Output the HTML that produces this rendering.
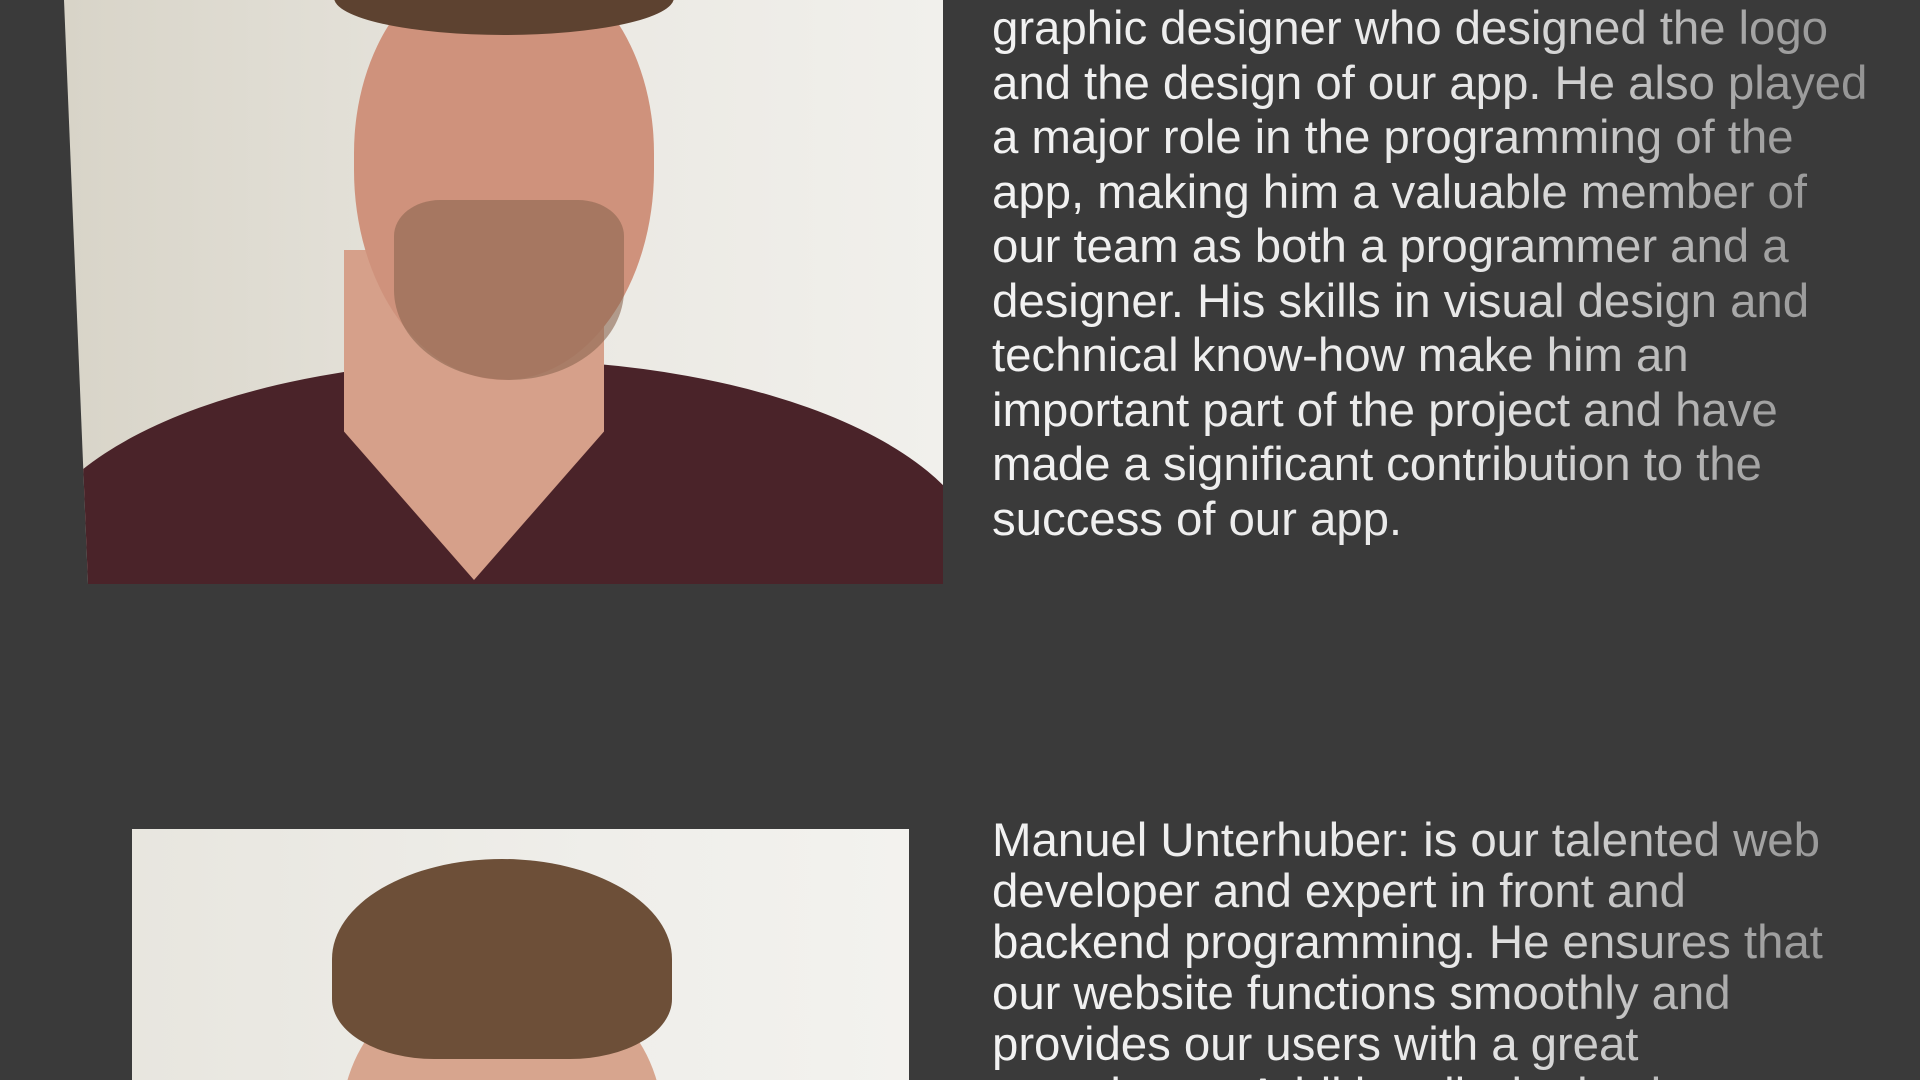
<!DOCTYPE html>
<html><head><meta charset="utf-8"><style>
html,body{margin:0;padding:0;background:#3a3a3a;width:1920px;height:1080px;overflow:hidden;position:relative;font-family:"Gill Sans","Liberation Sans",sans-serif}
.t{position:absolute;left:992px;white-space:nowrap;font-size:47.5px;line-height:54.5px;letter-spacing:-0.1px;
background:linear-gradient(90deg,#f2f2f2 0px,#e8e8e8 480px,#a0a0a0 780px,#8c8c8c 940px);
-webkit-background-clip:text;background-clip:text;color:transparent;background-size:940px 100%;background-repeat:no-repeat}
.p1{position:absolute;left:64px;top:0;width:879px;height:584px;clip-path:polygon(0 0,100% 0,100% 100%,24px 100%);
background:linear-gradient(90deg,#d8d4c8,#ebe9e3 60%,#f1f0ec);overflow:hidden}
.p1 div,.p2 div{position:absolute}
.p2{position:absolute;left:132px;top:829px;width:777px;height:251px;
background:linear-gradient(90deg,#e8e6df,#efeeea 60%,#f3f2ee);overflow:hidden}
</style></head><body>
<div class="p1">
 <div style="left:-40px;top:360px;width:960px;height:420px;border-radius:50%;background:#4a2329"></div>
 <div style="left:280px;top:250px;width:260px;height:330px;background:#d6a08a;clip-path:polygon(0 0,100% 0,100% 55%,50% 100%,0 55%)"></div>
 <div style="left:290px;top:-40px;width:300px;height:420px;border-radius:46% 46% 50% 50%;background:#cf927c"></div>
 <div style="left:270px;top:-40px;width:340px;height:75px;border-radius:50%;background:#5d4230"></div>
 <div style="left:330px;top:200px;width:230px;height:180px;border-radius:20% 20% 50% 50%;background:#8a6650;opacity:.6"></div>
</div>
<div class="p2">
 <div style="left:210px;top:140px;width:320px;height:300px;border-radius:50%;background:#d7a58e"></div>
 <div style="left:200px;top:30px;width:340px;height:200px;border-radius:50% 50% 30% 30%;background:#6d4f38"></div>
</div>
<div class="t" style="top:2px">graphic designer who designed the logo<br>and the design of our app. He also played<br>a major role in the programming of the<br>app, making him a valuable member of<br>our team as both a programmer and a<br>designer. His skills in visual design and<br>technical know-how make him an<br>important part of the project and have<br>made a significant contribution to the<br>success of our app.</div>
<div class="t" style="top:815px;line-height:51px;height:265px;overflow:hidden">Manuel Unterhuber: is our talented web<br>developer and expert in front and<br>backend programming. He ensures that<br>our website functions smoothly and<br>provides our users with a great<br>experience. Additionally, he is also</div>
</body></html>
